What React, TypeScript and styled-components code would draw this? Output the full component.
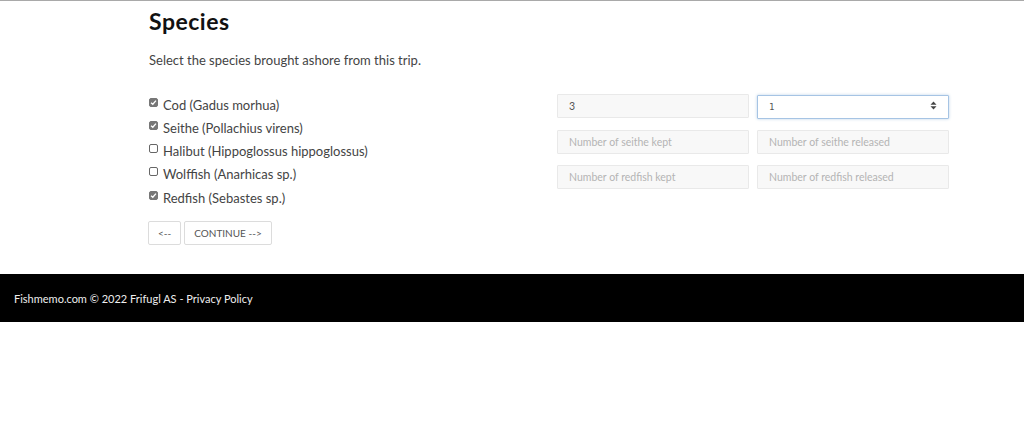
import styled, { createGlobalStyle } from "styled-components";

const GlobalStyle = createGlobalStyle`
  html, body {
    margin: 0;
    padding: 0;
    background: #fff;
    font-family: "Lato", "Open Sans", sans-serif;
    color: #333;
  }
`;

type Species = { name: string; latin: string; checked: boolean };

const species: Species[] = [
  { name: "Cod", latin: "Gadus morhua", checked: true },
  { name: "Seithe", latin: "Pollachius virens", checked: true },
  { name: "Halibut", latin: "Hippoglossus hippoglossus", checked: false },
  { name: "Wolffish", latin: "Anarhicas sp.", checked: false },
  { name: "Redfish", latin: "Sebastes sp.", checked: true },
];

export default function App() {
  return (
    <Page>
      <GlobalStyle />
      <Main>
        <Title>Species</Title>
        <Lead>Select the species brought ashore from this trip.</Lead>
        <FormGrid>
          <CheckList>
            {species.map((s) => (
              <CheckRow key={s.name}>
                <Box $checked={s.checked}>
                  {s.checked && (
                    <svg width="7" height="7" viewBox="0 0 8 8">
                      <path d="M1.2 4.2 L3.2 6 L6.8 1.8" fill="none" stroke="#fff" strokeWidth="1.5" />
                    </svg>
                  )}
                </Box>
                {s.name} ({s.latin})
              </CheckRow>
            ))}
          </CheckList>
          <Counts>
            <Field>
              <Input defaultValue="3" />
            </Field>
            <Field>
              <Input $focused $mono defaultValue="1" />
              <Spinner>
                <svg width="7" height="9" viewBox="0 0 7 9">
                  <path d="M3.5 0.5 L6.5 3.8 H0.5 Z" fill="#444" />
                  <path d="M3.5 8.5 L6.5 5.2 H0.5 Z" fill="#444" />
                </svg>
              </Spinner>
            </Field>
            <Field>
              <Input placeholder="Number of seithe kept" />
            </Field>
            <Field>
              <Input placeholder="Number of seithe released" />
            </Field>
            <Field>
              <Input placeholder="Number of redfish kept" />
            </Field>
            <Field>
              <Input placeholder="Number of redfish released" />
            </Field>
          </Counts>
        </FormGrid>
        <Buttons>
          <Button>&lt;--</Button>
          <Button>CONTINUE --&gt;</Button>
        </Buttons>
      </Main>
      <Footer>Fishmemo.com © 2022 Frifugl AS - Privacy Policy</Footer>
    </Page>
  );
}

const Page = styled.div`
  border-top: 1px solid #a9a9a9;
`;

const Main = styled.main`
  padding: 0 0 29px 149px;
  width: 800px;
`;

const Title = styled.h1`
  margin: 0;
  padding-top: 7px;
  font-size: 23px;
  line-height: 26px;
  font-weight: 700;
  letter-spacing: 0.5px;
  color: #111;
`;

const Lead = styled.p`
  margin: 17px 0 0;
  font-size: 13px;
  line-height: 18px;
  color: #444;
`;

const FormGrid = styled.div`
  margin-top: 25px;
  display: grid;
  grid-template-columns: 408px 392px;
`;

const CheckList = styled.div`
  display: flex;
  flex-direction: column;
  margin-top: -1px;
`;

const CheckRow = styled.label`
  display: flex;
  align-items: center;
  height: 23.25px;
  font-size: 13px;
  color: #444;
`;

const Box = styled.span<{ $checked: boolean }>`
  width: 9px;
  height: 9px;
  margin-right: 5px;
  margin-top: -5px;
  box-sizing: border-box;
  border-radius: 2px;
  display: inline-flex;
  align-items: center;
  justify-content: center;
  border: 1px solid ${({ $checked }) => ($checked ? "#777" : "#666")};
  background: ${({ $checked }) => ($checked ? "#777" : "#fff")};
`;

const Counts = styled.div`
  display: grid;
  grid-template-columns: 192px 192px;
  column-gap: 8px;
  row-gap: 11px;
  align-content: start;
`;

const Field = styled.div`
  position: relative;
`;

const Input = styled.input<{ $focused?: boolean; $mono?: boolean }>`
  box-sizing: border-box;
  width: 100%;
  height: 24px;
  padding: 0 11px;
  font-family: ${({ $mono }) => ($mono ? '"DejaVu Sans Mono", monospace' : '"Lato", sans-serif')};
  font-size: ${({ $mono }) => ($mono ? "9px" : "10.5px")};
  color: #555;
  border: 1px solid ${({ $focused }) => ($focused ? "#a6c4e4" : "#e9e9e9")};
  border-radius: 1px;
  background: ${({ $focused }) => ($focused ? "#fff" : "#f8f8f8")};
  box-shadow: ${({ $focused }) => ($focused ? "0 0 3px rgba(102,153,204,0.45)" : "none")};
  outline: none;

  &::placeholder {
    color: #b4b4b4;
  }
`;

const Spinner = styled.span`
  position: absolute;
  right: 12px;
  top: 7px;
  display: flex;
`;

const Buttons = styled.div`
  margin-top: 12px;
  display: flex;
  gap: 3px;
  margin-left: -1px;
`;

const Button = styled.button`
  height: 24px;
  padding: 0 9px;
  background: #fff;
  border: 1px solid #dcdcdc;
  border-radius: 2px;
  font-family: "Lato", sans-serif;
  font-size: 10px;
  color: #555;
  cursor: pointer;
`;

const Footer = styled.footer`
  background: #000;
  color: #eee;
  height: 48px;
  display: flex;
  align-items: center;
  padding-left: 14px;
  font-size: 11px;
`;
